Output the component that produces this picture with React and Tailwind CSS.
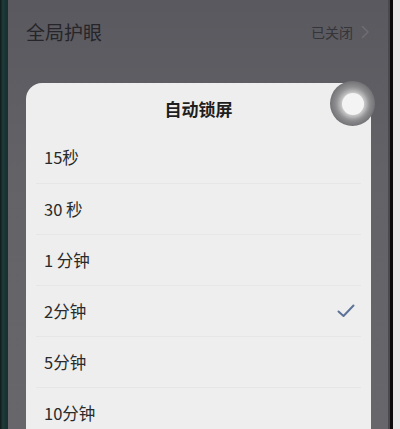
const options = ["15秒", "30 秒", "1 分钟", "2分钟", "5分钟", "10分钟"];
const selected = "2分钟";

const font = { fontFamily: '"Noto Sans CJK SC", "Noto Sans", sans-serif' };

const Chevron = () => (
  <svg width="9" height="14" viewBox="0 0 9 14" fill="none">
    <path d="M1.5 1.5 7 7l-5.5 5.5" stroke="#6e6d72" strokeWidth="1.5" strokeLinecap="round" strokeLinejoin="round" />
  </svg>
);

const Check = () => (
  <svg width="18" height="14" viewBox="0 0 18 14" fill="none">
    <path d="M1.5 7.5 6.5 12 16.5 1.5" stroke="#5c7299" strokeWidth="2" strokeLinecap="round" strokeLinejoin="round" />
  </svg>
);

// floating assistive-touch button sitting over the dialog corner
const FloatBall = () => (
  <div className="absolute left-[330px] top-[81px] flex h-[45px] w-[45px] items-center justify-center rounded-full bg-[radial-gradient(circle,#9a9a9c_45%,#6c6c70_75%,#5e5e62_100%)]">
    <div className="h-[22px] w-[22px] rounded-full bg-[#f4f4f4] shadow-[0_0_4px_2px_rgba(255,255,255,0.6)]" />
  </div>
);

export default function App() {
  return (
    <div className="relative flex h-[429px] w-[400px] overflow-hidden bg-[#5f5e63]" style={font}>
      {/* phone bezel */}
      <div className="w-[8px] shrink-0 bg-[linear-gradient(90deg,#101a1a,#1e3a3a_40%,#173030)] border-r border-[#2a2a2c]" />

      <div className="flex min-h-0 flex-1 flex-col bg-[linear-gradient(180deg,#5a595f,#636267_40%,#67666a)]">
        <div className="flex h-[62px] shrink-0 items-center pl-[18px] pr-[18px] pt-[2px]">
          <span className="text-[19px] text-[#262529]">全局护眼</span>
          <span className="ml-auto mr-[8px] text-[14px] text-[#353438]">已关闭</span>
          <Chevron />
        </div>

        <div className="ml-[18px] mr-[17px] mt-[21px] shrink-0 rounded-t-[16px] bg-[#eeeeee]">
          <div className="flex h-[49px] items-center justify-center pt-[2px] text-[17px] font-bold text-[#1e1e1e]">
            自动锁屏
          </div>
          {options.map((opt, i) => (
            <div
              key={opt}
              className={`mx-[10px] flex h-[51px] items-center px-[8px] ${i > 0 ? "border-t border-[#e6e6e6]" : ""}`}
            >
              <span className="text-[16.5px] text-[#2a2a2a]">{opt}</span>
              {opt === selected && (
                <span className="ml-auto mr-[-2px]">
                  <Check />
                </span>
              )}
            </div>
          ))}
        </div>
      </div>

      <div className="w-[2px] shrink-0 bg-[#4a494d]" />
      <div className="w-[3px] shrink-0 bg-[#0c0c0e]" />
      <div className="w-[7px] shrink-0 bg-[#e8e8ea]" />

      <FloatBall />
    </div>
  );
}
